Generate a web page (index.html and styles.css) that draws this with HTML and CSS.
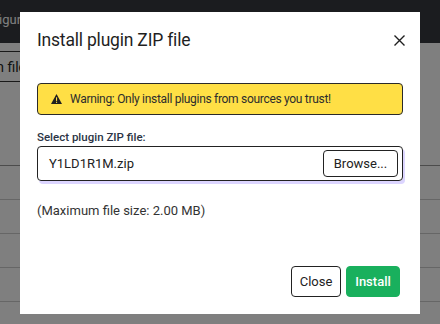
FILE: index.html
```html
<!DOCTYPE html>
<html>
<head>
  <meta charset="utf-8">
  <link rel="stylesheet" href="styles.css">
</head>
<body>

  <!-- page under the dialog -->
  <div class="topbar">
    <span class="topbar-title">Configuration</span>
  </div>
  <div class="toolbar">
    <button type="button" class="scan-btn">Scan files</button>
  </div>
  <div class="table">
    <div class="row row-head"></div>
    <div class="row"></div>
    <div class="row"></div>
    <div class="row"></div>
    <div class="row"></div>
    <div class="row row-last"><span class="cell-text">Trade</span></div>
  </div>

  <!-- dialog -->
  <div class="backdrop">
    <div class="modal">
      <div class="modal-header">
        <h2 class="modal-title">Install plugin ZIP file</h2>
        <button type="button" class="modal-close" aria-label="Close">
          <svg width="11" height="11" viewBox="0 0 11 11">
            <path d="M0.5 0.5 L10.5 10.5 M10.5 0.5 L0.5 10.5" stroke="#1f1f1f" stroke-width="1.4" fill="none" />
          </svg>
        </button>
      </div>

      <div class="modal-body">
        <div class="warning">
          <svg class="warning-icon" width="11" height="10" viewBox="0 0 11 10">
            <path d="M5.5 0 L11 10 L0 10 Z" fill="#1f1f1f" />
            <rect x="5" y="3.3" width="1.1" height="3.6" fill="#ffdf45" />
            <rect x="5" y="7.7" width="1.1" height="1.2" fill="#ffdf45" />
          </svg>
          <span>Warning: Only install plugins from sources you trust!</span>
        </div>

        <label class="file-label" for="pluginFile">Select plugin ZIP file:</label>
        <div class="file-input" id="pluginFile">
          <span class="file-name">Y1LD1R1M.zip</span>
          <button type="button" class="browse-btn">Browse...</button>
        </div>

        <p class="file-hint">(Maximum file size: 2.00 MB)</p>
      </div>

      <div class="modal-footer">
        <button type="button" class="btn btn-close">Close</button>
        <button type="button" class="btn btn-install">Install</button>
      </div>
    </div>
  </div>

</body>
</html>
```

FILE: styles.css
```css
body {
  margin: 0;
  background: #fff;
  color: #222;
  font-family: Roboto, sans-serif;
  overflow: hidden;
}

button {
  font-family: inherit;
  cursor: pointer;
}

/* Page behind the dialog */
.topbar {
  height: 43px;
  background: #37393f;
  display: flex;
  align-items: center;
}

.topbar-title {
  margin-left: -28px;
  margin-top: -5px;
  color: #fff;
  font-size: 13px;
}

.toolbar {
  padding-top: 8px;
  height: 114px;
}

.scan-btn {
  margin-left: -40px;
  height: 31px;
  padding: 0 12px;
  background: #fff;
  border: 1px solid #333;
  border-radius: 4px;
  font-size: 14px;
  color: #222;
}

.row {
  height: 33px;
  border-top: 1px solid #ccc;
}

.row-head {
  border-top-color: #999;
}

.row-last {
  height: 20px;
}

.cell-text {
  display: block;
  margin-left: -28px;
  margin-top: 6px;
  font-size: 14px;
}

/* Dialog */
.backdrop {
  position: fixed;
  inset: 0;
  background: rgba(0, 0, 0, 0.5);
  display: flex;
  justify-content: center;
  align-items: flex-start;
  padding-top: 12px;
}

.modal {
  width: 400px;
  height: 302px;
  background: #fff;
  display: flex;
  flex-direction: column;
}

.modal-header {
  height: 56px;
  padding: 0 15px 0 17px;
  display: flex;
  align-items: center;
  justify-content: space-between;
}

.modal-title {
  margin: 0;
  font-size: 17.5px;
  letter-spacing: -0.2px;
  font-weight: 400;
  color: #1f1f1f;
}

.modal-close {
  border: none;
  background: none;
  padding: 0;
  width: 11px;
  height: 11px;
  display: flex;
}

.modal-body {
  padding: 15px 17px 0;
}

.warning {
  height: 30px;
  background: #ffdf45;
  border: 1px solid #2a2a2a;
  border-radius: 4px;
  display: flex;
  align-items: center;
  gap: 8px;
  padding-left: 13px;
  font-size: 12px;
  letter-spacing: -0.3px;
  color: #2d2d2d;
}

.file-label {
  display: block;
  margin-top: 14px;
  height: 16px;
  line-height: 16px;
  font-size: 11.5px;
  font-weight: 500;
  color: #2b3445;
}

.file-input {
  margin-top: 1px;
  height: 33px;
  border: 1px solid #222;
  border-radius: 4px;
  box-shadow: 2px 3px 0 #dcd5ff;
  display: flex;
  align-items: center;
  justify-content: space-between;
  padding: 0 4px 0 11px;
}

.file-name {
  font-size: 13px;
  color: #222;
}

.browse-btn {
  height: 27px;
  width: 75px;
  background: #fff;
  border: 1px solid #222;
  border-radius: 4px;
  font-size: 13px;
  color: #222;
  padding: 0;
}

.file-hint {
  margin: 21px 0 0;
  line-height: 18px;
  font-size: 13px;
  color: #333;
}

.modal-footer {
  margin-top: auto;
  padding: 0 20px 17px;
  display: flex;
  justify-content: flex-end;
  gap: 5px;
}

.btn {
  height: 31px;
  border-radius: 4px;
  font-size: 13px;
  padding: 0;
}

.btn-close {
  width: 50px;
  background: #fff;
  border: 1px solid #222;
  color: #222;
}

.btn-install {
  width: 54px;
  background: #19b05d;
  border: 1px solid #19b05d;
  color: #fff;
  font-weight: 500;
}
```
